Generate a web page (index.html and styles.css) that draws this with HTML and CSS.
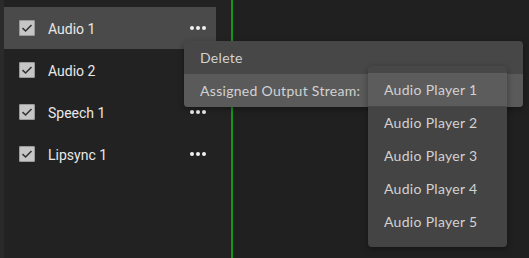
FILE: index.html
```html
<!DOCTYPE html>
<html lang="en">
<head>
    <meta charset="UTF-8">
    <title>Tracks</title>
    <link rel="stylesheet" href="styles.css">
</head>
<body>

    <div class="edge"></div>

    <div class="panel">
        <ul class="track-list">
            <li class="track active">
                <span class="check"><svg width="12" height="10" viewBox="0 0 12 10"><path d="M1.5 5.2 L4.6 8 L10.5 2" fill="none" stroke="#333" stroke-width="1.6"/></svg></span>
                <span class="name">Audio 1</span>
                <span class="dots"><i></i><i></i><i></i></span>
            </li>
            <li class="track">
                <span class="check"><svg width="12" height="10" viewBox="0 0 12 10"><path d="M1.5 5.2 L4.6 8 L10.5 2" fill="none" stroke="#333" stroke-width="1.6"/></svg></span>
                <span class="name">Audio 2</span>
                <span class="dots"><i></i><i></i><i></i></span>
            </li>
            <li class="track">
                <span class="check"><svg width="12" height="10" viewBox="0 0 12 10"><path d="M1.5 5.2 L4.6 8 L10.5 2" fill="none" stroke="#333" stroke-width="1.6"/></svg></span>
                <span class="name">Speech 1</span>
                <span class="dots"><i></i><i></i><i></i></span>
            </li>
            <li class="track">
                <span class="check"><svg width="12" height="10" viewBox="0 0 12 10"><path d="M1.5 5.2 L4.6 8 L10.5 2" fill="none" stroke="#333" stroke-width="1.6"/></svg></span>
                <span class="name">Lipsync 1</span>
                <span class="dots"><i></i><i></i><i></i></span>
            </li>
        </ul>
    </div>

    <div class="timeline-line"></div>
    <div class="timeline"></div>

    <!-- context menu for Audio 1 -->
    <div class="context-menu">
        <div class="menu-item">Delete</div>
        <div class="menu-item hover">Assigned Output Stream:</div>
    </div>

    <div class="submenu">
        <div class="sub-item">Audio Player 1</div>
        <div class="sub-item">Audio Player 2</div>
        <div class="sub-item">Audio Player 3</div>
        <div class="sub-item">Audio Player 4</div>
        <div class="sub-item">Audio Player 5</div>
    </div>

</body>
</html>
```

FILE: styles.css
```css
body {
    margin: 0;
    padding: 0;
    height: 258px;
    background-color: #222222;
    font-family: 'Roboto', sans-serif;
    display: flex;
    overflow: hidden;
}

.edge {
    width: 4px;
    background-color: #2a2a2a;
}

.panel {
    width: 227px;
}

.track-list {
    list-style: none;
    margin: 0;
    padding: 7px 0 0 0;
    width: 212px;
}

.track {
    height: 42px;
    display: flex;
    align-items: center;
    padding: 0 10px 0 15px;
    box-sizing: border-box;
    color: #e8e8e8;
    font-size: 14px;
}

.track.active {
    background-color: #4a4a4a;
}

.check {
    width: 16px;
    height: 16px;
    border-radius: 2px;
    background-color: #c6c6c6;
    box-shadow: inset 0 0 0 1px #9a9a9a;
    display: flex;
    align-items: center;
    justify-content: center;
}

.name {
    margin-left: 13px;
    flex: 1;
    padding-top: 1px;
}

.dots {
    display: flex;
    gap: 2px;
}

.dots i {
    width: 4px;
    height: 4px;
    border-radius: 50%;
    background-color: #f0f0f0;
}

.timeline-line {
    width: 2px;
    background-color: #14961a;
}

.timeline {
    flex: 1;
    background-color: #202020;
}

.context-menu {
    position: absolute;
    left: 184px;
    top: 41px;
    width: 339px;
    background-color: #474747;
    border-radius: 4px;
    overflow: hidden;
    box-shadow: 0 2px 6px rgba(0, 0, 0, 0.35);
    font-family: 'Lato', sans-serif;
    font-size: 14px;
    letter-spacing: 0.3px;
    color: #d2d2d2;
}

.menu-item {
    height: 33px;
    line-height: 33px;
    padding-left: 16px;
}

.menu-item.hover {
    background-color: #5a5a5a;
}

.submenu {
    position: absolute;
    left: 368px;
    top: 66px;
    width: 139px;
    padding: 7px 0 9px 0;
    background-color: rgba(72, 72, 72, 0.92);
    border-radius: 4px;
    box-shadow: 0 2px 6px rgba(0, 0, 0, 0.35);
    font-family: 'Lato', sans-serif;
    font-size: 14px;
    letter-spacing: 0.3px;
    color: #d2d2d2;
}

.sub-item {
    height: 33px;
    line-height: 33px;
    padding-left: 16px;
}

.sub-item:first-child {
    background-color: #5c5c5c;
}
```
